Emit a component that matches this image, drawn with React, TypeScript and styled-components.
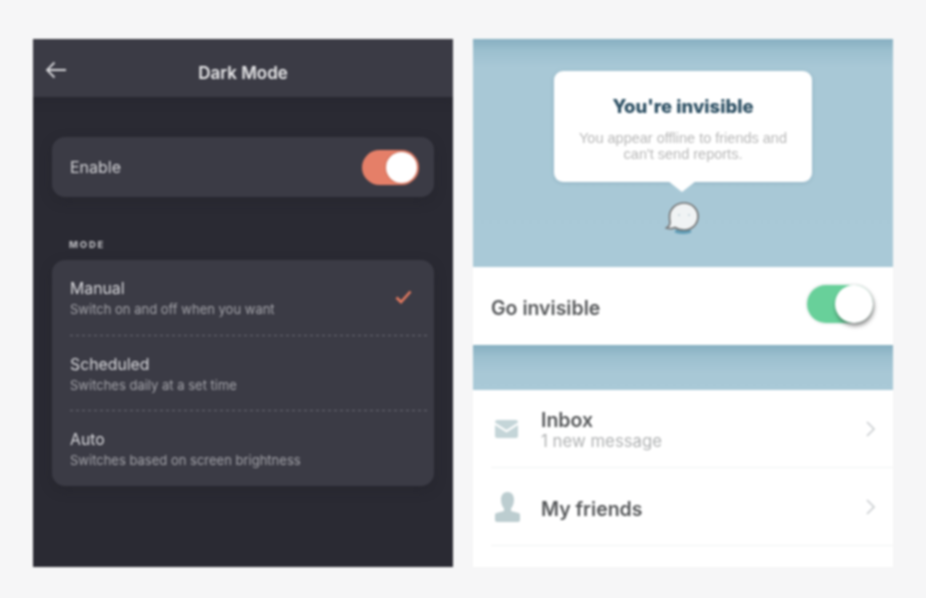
import styled, { createGlobalStyle } from "styled-components";

const GlobalStyle = createGlobalStyle`
  html, body {
    margin: 0;
    padding: 0;
    background-color: #f6f6f7;
  }
`;

const Page = styled.div`
  width: 926px;
  height: 598px;
  box-sizing: border-box;
  padding: 39px 33px 31px;
  display: flex;
  gap: 20px;
  overflow: hidden;
`;

const Panel = styled.div`
  width: 420px;
  height: 528px;
  display: flex;
  flex-direction: column;
  overflow: hidden;
  filter: blur(0.8px);
`;

const DarkPanel = styled(Panel)`
  background-color: #2a2a33;
  font-family: "Inter", "Liberation Sans", sans-serif;
`;

const LightPanel = styled(Panel)`
  background-color: #ffffff;
  font-family: "Inter", "Liberation Sans", sans-serif;
`;

const Header = styled.div`
  height: 58px;
  flex-shrink: 0;
  box-sizing: border-box;
  padding-top: 10px;
  background-color: #3b3b45;
  display: flex;
  align-items: center;
  justify-content: center;
  position: relative;
  box-shadow: 0 3px 8px #23232b80;
`;

const BackIcon = styled.svg`
  position: absolute;
  left: 12px;
  top: 22px;
`;

const HeaderTitle = styled.div`
  color: #e6e6e8;
  font-size: 17px;
  font-weight: 600;
`;

const DarkBody = styled.div`
  padding: 40px 19px 0;
  display: flex;
  flex-direction: column;
`;

const Card = styled.div`
  background-color: #3b3b45;
  border-radius: 13px;
  box-shadow: 0 4px 12px #22222a70;
`;

const EnableCard = styled(Card)`
  height: 60px;
  box-sizing: border-box;
  padding: 0 15px 0 18px;
  display: flex;
  align-items: center;
  justify-content: space-between;
`;

const EnableLabel = styled.span`
  color: #d2d2d6;
  font-size: 16px;
`;

const Toggle = styled.div<{ $w: number; $h: number; $color: string }>`
  width: ${(p) => p.$w}px;
  height: ${(p) => p.$h}px;
  background-color: ${(p) => p.$color};
  border-radius: ${(p) => p.$h / 2}px;
  position: relative;
  flex-shrink: 0;
`;

const Knob = styled.div<{ $size: number; $inset: number; $shadow: string }>`
  width: ${(p) => p.$size}px;
  height: ${(p) => p.$size}px;
  border-radius: 50%;
  background-color: #ffffff;
  position: absolute;
  right: ${(p) => p.$inset}px;
  top: ${(p) => p.$inset}px;
  box-shadow: ${(p) => p.$shadow};
`;

const SectionLabel = styled.div`
  margin: 42px 0 9px 17px;
  color: #b3b3b8;
  font-size: 9.5px;
  font-weight: 800;
  letter-spacing: 1.8px;
  line-height: 12px;
`;

const ModeList = styled(Card)`
  display: flex;
  flex-direction: column;
  height: 226px;
`;

const ModeRow = styled.div`
  height: 75.5px;
  flex-shrink: 0;
  box-sizing: border-box;
  margin-left: 18px;
  padding: 19px 0 0;
  display: flex;
  align-items: flex-start;
  justify-content: space-between;
`;

const DashedRule = styled.div`
  height: 1px;
  margin: -1px 4px 0 18px;
  flex-shrink: 0;
  background-image: repeating-linear-gradient(90deg, #6a6a74 0 3px, transparent 3px 6px);
`;

const ModeText = styled.div`
  display: flex;
  flex-direction: column;
  gap: 2px;
`;

const ModeTitle = styled.div`
  color: #d6d6da;
  font-size: 15.8px;
  line-height: 20px;
`;

const ModeSub = styled.div`
  color: #a2a2a8;
  font-size: 13px;
  line-height: 16px;
`;

const CheckIcon = styled.svg`
  margin: 11px 22px 0 0;
`;

const Sky = styled.div<{ $height: number }>`
  height: ${(p) => p.$height}px;
  flex-shrink: 0;
  background: linear-gradient(#87afc1 0, #9cc0cf 12px, #a8c8d6 28px, #a9c9d7 100%);
`;

const SkyTop = styled(Sky)`
  display: flex;
  flex-direction: column;
  align-items: center;
  padding-top: 32px;
  box-sizing: border-box;
`;

const Bubble = styled.div`
  width: 258px;
  height: 111px;
  box-sizing: border-box;
  padding-top: 24px;
  background-color: #ffffff;
  border-radius: 9px;
  box-shadow: 0 1px 4px #6f94a670;
  text-align: center;
  position: relative;
  &::after {
    content: "";
    position: absolute;
    left: 114px;
    bottom: -10px;
    width: 0;
    height: 0;
    border-left: 14px solid transparent;
    border-right: 14px solid transparent;
    border-top: 11px solid #ffffff;
  }
`;

const BubbleTitle = styled.div`
  color: #2c4f63;
  font-size: 18.5px;
  font-weight: 800;
  line-height: 22px;
`;

const BubbleText = styled.div`
  margin-top: 13px;
  color: #b8b8b8;
  font-family: "Liberation Sans", sans-serif;
  font-size: 14.5px;
  line-height: 16px;
`;

const Ghost = styled.svg`
  margin-top: 19px;
`;

const ToggleRow = styled.div`
  height: 78px;
  flex-shrink: 0;
  box-sizing: border-box;
  padding: 0 20px 0 18px;
  display: flex;
  align-items: center;
  justify-content: space-between;
`;

const RowTitle = styled.div`
  color: #555759;
  font-size: 19.5px;
  font-weight: 600;
  line-height: 24px;
`;

const GoLabel = styled(RowTitle)`
  padding-top: 4px;
`;

const GoToggle = styled(Toggle)`
  box-shadow: 0 0 0 2px #f3f4f4;
  margin-bottom: 4px;
`;

const MenuList = styled.div`
  display: flex;
  flex-direction: column;
  padding-left: 18px;
`;

const MenuRow = styled.div`
  height: 78px;
  flex-shrink: 0;
  box-sizing: border-box;
  border-bottom: 1px solid #f1f3f3;
  display: flex;
  align-items: center;
  padding-right: 17px;
`;

const MenuIcon = styled.svg`
  margin-left: 4px;
  flex-shrink: 0;
`;

const MenuText = styled.div<{ $drop: number }>`
  margin-left: 21px;
  padding-top: ${(p) => p.$drop}px;
  flex: 1;
  display: flex;
  flex-direction: column;
`;

const MenuSub = styled.div`
  color: #b0b2b3;
  font-size: 16.8px;
  line-height: 19px;
`;

const Chevron = styled.svg`
  flex-shrink: 0;
`;

function ChevronRight() {
  return (
    <Chevron width="11" height="18" viewBox="0 0 11 18" fill="none">
      <path d="M2 2l7 7-7 7" stroke="#cbcfd1" strokeWidth="1.7" />
    </Chevron>
  );
}

const modes = [
  { title: "Manual", sub: "Switch on and off when you want", selected: true },
  { title: "Scheduled", sub: "Switches daily at a set time" },
  { title: "Auto", sub: "Switches based on screen brightness" },
];

export default function App() {
  return (
    <>
      <GlobalStyle />
      <Page>
        <DarkPanel>
          <Header>
            <BackIcon width="22" height="18" viewBox="0 0 22 18" fill="none">
              <path d="M21 9H2M9.5 1.500L2 9l7.500 7.500" stroke="#d5d5d9" strokeWidth="1.8" />
            </BackIcon>
            <HeaderTitle>Dark Mode</HeaderTitle>
          </Header>
          <DarkBody>
            <EnableCard>
              <EnableLabel>Enable</EnableLabel>
              <Toggle $w={57} $h={35} $color="#e57f68">
                <Knob $size={31} $inset={2} $shadow="0 0 2px #b0553f" />
              </Toggle>
            </EnableCard>
            <SectionLabel>MODE</SectionLabel>
            <ModeList>
              {modes.map((m, i) => (
                <div key={m.title}>
                  <ModeRow>
                    <ModeText>
                      <ModeTitle>{m.title}</ModeTitle>
                      <ModeSub>{m.sub}</ModeSub>
                    </ModeText>
                    {m.selected && (
                      <CheckIcon width="17" height="14" viewBox="0 0 17 14" fill="none">
                        <path d="M1.500 7.500l4.500 4.500L15.500 1.500" stroke="#e2795f" strokeWidth="2.6" />
                      </CheckIcon>
                    )}
                  </ModeRow>
                  {i < 2 && <DashedRule />}
                </div>
              ))}
            </ModeList>
          </DarkBody>
        </DarkPanel>

        <LightPanel>
          <SkyTop $height={228}>
            <Bubble>
              <BubbleTitle>You're invisible</BubbleTitle>
              <BubbleText>
                You appear offline to friends and
                <br />
                can't send reports.
              </BubbleText>
            </Bubble>
            <Ghost width="36" height="34" viewBox="0 0 36 34" fill="none">
              <ellipse cx="18" cy="30.500" rx="8.500" ry="2.500" fill="#5f9cb6" />
              <path
                d="M19 2c8 0 14 6 14 13.500S27 29 19 29c-4 0-7-1-9-2.500-2 1-5 1.500-8.500.5 2-1 3.500-3 3.500-6-.5-2-.5-4-.5-5.500C4.500 8 11 2 19 2z"
                fill="#f0f3f4"
                stroke="#747474"
                strokeWidth="1.7"
              />
              <circle cx="14" cy="14" r="1.100" fill="#c3d3da" />
              <circle cx="24" cy="14" r="1.100" fill="#c3d3da" />
            </Ghost>
          </SkyTop>
          <ToggleRow>
            <GoLabel>Go invisible</GoLabel>
            <GoToggle $w={66} $h={38} $color="#68d09a">
              <Knob $size={38} $inset={0} $shadow="1px 3px 4px #00000070" />
            </GoToggle>
          </ToggleRow>
          <Sky $height={45} />
          <MenuList>
            <MenuRow>
              <MenuIcon width="25" height="20" viewBox="1 0 25 20">
                <path d="M1 3.500C1 2 2 1 3 1h19c1 0 2 1 2 2.500L12.500 11z" fill="#c4d5d8" />
                <path d="M1 6l11.500 7.500L24 6v11c0 1-1 2-2 2H3c-1 0-2-1-2-2z" fill="#c4d5d8" />
              </MenuIcon>
              <MenuText $drop={2}>
                <RowTitle>Inbox</RowTitle>
                <MenuSub>1 new message</MenuSub>
              </MenuText>
              <ChevronRight />
            </MenuRow>
            <MenuRow>
              <MenuIcon width="25" height="30" viewBox="0 0 25 30">
                <path
                  d="M12.500 0c4 0 6.500 3 6.500 7.500 0 4-1.300 7-3 9V19l7.500 2c1 .3 1.500 1 1.500 2v5c0 1-1 2-2 2H2c-1 0-2-1-2-2v-5c0-1 .5-1.700 1.500-2L9 19v-2.500c-1.700-2-3-5-3-9C6 3 8.500 0 12.500 0z"
                  fill="#bccdd0"
                />
              </MenuIcon>
              <MenuText $drop={4}>
                <RowTitle>My friends</RowTitle>
              </MenuText>
              <ChevronRight />
            </MenuRow>
          </MenuList>
        </LightPanel>
      </Page>
    </>
  );
}
